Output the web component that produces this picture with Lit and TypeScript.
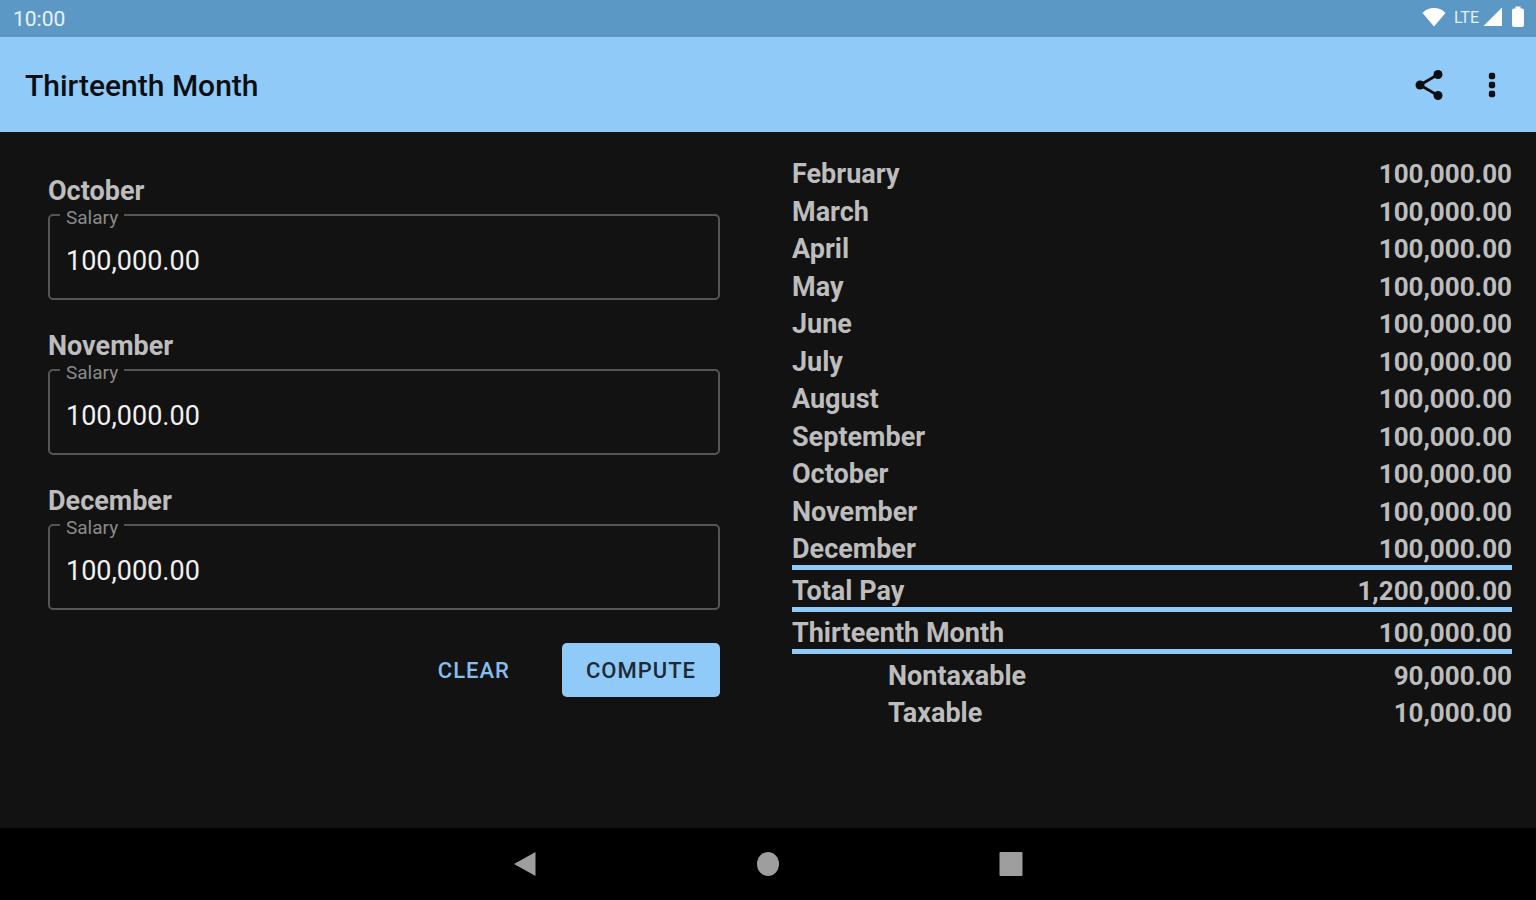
import { LitElement, html, css } from "lit";
import { customElement, state } from "lit/decorators.js";

interface ResultRow {
  name: string;
  amount: string;
  kind?: "ruled" | "indented";
}

@customElement("salary-field")
class SalaryField extends LitElement {
  static properties = {
    month: { type: String },
    value: { type: String },
  };

  declare month: string;
  declare value: string;

  static styles = css`
    :host {
      display: block;
    }
    .month {
      margin: 0 0 8px;
      font-size: 27px;
      line-height: 30px;
      font-weight: 700;
      color: #bdbdbd;
    }
    .box {
      position: relative;
    }
    .caption {
      position: absolute;
      top: -6px;
      left: 12px;
      padding: 0 6px;
      background: #121212;
      color: #8a8a8a;
      font-size: 19px;
      line-height: 20px;
    }
    .input {
      display: block;
      box-sizing: border-box;
      width: 100%;
      height: 86px;
      margin: 0;
      padding: 8px 16px 0;
      border: 2px solid #555555;
      border-radius: 5px;
      background: transparent;
      color: #f0f0f0;
      font: 400 27px Roboto, sans-serif;
      outline: none;
    }
    .input:focus-visible {
      border-color: #90caf9;
    }
  `;

  render() {
    return html`
      <h2 class="month">${this.month}</h2>
      <div class="box">
        <input class="input" id="salary" type="text" inputmode="decimal" .value=${this.value} />
        <label class="caption" for="salary">Salary</label>
      </div>
    `;
  }
}

@customElement("app-root")
class AppRoot extends LitElement {
  @state() private fields = [
    { month: "October", value: "100,000.00" },
    { month: "November", value: "100,000.00" },
    { month: "December", value: "100,000.00" },
  ];

  private rows: ResultRow[] = [
    { name: "February", amount: "100,000.00" },
    { name: "March", amount: "100,000.00" },
    { name: "April", amount: "100,000.00" },
    { name: "May", amount: "100,000.00" },
    { name: "June", amount: "100,000.00" },
    { name: "July", amount: "100,000.00" },
    { name: "August", amount: "100,000.00" },
    { name: "September", amount: "100,000.00" },
    { name: "October", amount: "100,000.00" },
    { name: "November", amount: "100,000.00" },
    { name: "December", amount: "100,000.00", kind: "ruled" },
    { name: "Total Pay", amount: "1,200,000.00", kind: "ruled" },
    { name: "Thirteenth Month", amount: "100,000.00", kind: "ruled" },
    { name: "Nontaxable", amount: "90,000.00", kind: "indented" },
    { name: "Taxable", amount: "10,000.00", kind: "indented" },
  ];

  static styles = css`
    :host {
      display: flex;
      flex-direction: column;
      min-height: 100vh;
      background: #121212;
      font-family: Roboto, sans-serif;
    }
    button {
      margin: 0;
      padding: 0;
      border: 0;
      background: none;
      color: inherit;
      font: inherit;
      cursor: pointer;
    }
    svg {
      display: block;
    }
    .status {
      display: flex;
      align-items: center;
      justify-content: space-between;
      height: 37px;
      padding: 0 11px 0 13px;
      background: #5c98c6;
      color: #eaf3fb;
      font-size: 21px;
    }
    .signals {
      display: flex;
      align-items: center;
      padding-bottom: 3px;
      color: #ffffff;
    }
    .network {
      margin: 0 4px 0 8px;
      font-size: 16px;
      color: #e3effa;
    }
    .battery {
      margin-left: 8px;
    }
    .bar {
      display: flex;
      align-items: center;
      justify-content: space-between;
      height: 95px;
      padding: 0 26px 0 25px;
      background: #90caf9;
      color: #0b0f13;
    }
    .title {
      margin: 0;
      padding-top: 2px;
      font-size: 30px;
      line-height: 40px;
      font-weight: 500;
    }
    .actions {
      display: flex;
      gap: 27px;
    }
    .content {
      flex: 1;
      display: grid;
      grid-template-columns: 1fr 1fr;
      align-items: start;
    }
    .form {
      display: flex;
      flex-direction: column;
      gap: 31px;
      padding: 44px 48px 0;
    }
    .buttons {
      display: flex;
      justify-content: flex-end;
      gap: 28px;
      padding-top: 2px;
    }
    .button {
      height: 54px;
      padding: 0 24px;
      border-radius: 5px;
      font-size: 22px;
      font-weight: 500;
      letter-spacing: 1px;
    }
    .clear {
      color: #86bdea;
    }
    .compute {
      background: #90caf9;
      color: #1d2b38;
    }
    .results {
      padding: 21px 24px 0;
    }
    .table {
      width: 100%;
      border-spacing: 0;
      color: #bdbdbd;
      line-height: 31px;
    }
    .row:nth-child(even) {
      line-height: 32px;
    }
    .row.ruled {
      line-height: 31px;
    }
    .cell {
      padding: 6px 0 0;
      font-weight: 700;
      vertical-align: top;
    }
    .name {
      text-align: left;
      font-size: 27px;
    }
    .amount {
      text-align: right;
      font-size: 26px;
    }
    .ruled .cell {
      border-bottom: 5px solid #90caf9;
    }
    .indented .name {
      padding-left: 96px;
    }
    .nav {
      display: flex;
      justify-content: center;
      height: 72px;
      background: #000000;
      color: #9e9e9e;
    }
    .key {
      display: flex;
      align-items: center;
      justify-content: center;
      width: 243px;
    }
  `;

  private clear() {
    this.fields = this.fields.map((field) => ({ ...field, value: "" }));
  }

  render() {
    return html`
      <div class="status">
        <span>10:00</span>
        <div class="signals">
          <svg width="24" height="20" viewBox="0 0 24 20" fill="currentColor" aria-hidden="true">
            <path d="M12 19.500L0.500 6Q5 1 12 1T23.500 6Z" />
          </svg>
          <span class="network">LTE</span>
          <svg width="20" height="20" viewBox="0 0 20 20" fill="currentColor" aria-hidden="true">
            <path d="M19 0.500V19H0.500Z" />
          </svg>
          <svg class="battery" width="14" height="22" viewBox="0 0 14 22" fill="currentColor" aria-hidden="true">
            <path d="M4.500 0.500H9.500V2.500H11Q13 2.500 13 4.500V19Q13 21 11 21H3Q1 21 1 19V4.500Q1 2.500 3 2.500H4.500Z" />
          </svg>
        </div>
      </div>
      <header class="bar">
        <h1 class="title">Thirteenth Month</h1>
        <div class="actions">
          <button type="button" aria-label="Share">
            <svg width="36" height="36" viewBox="0 0 24 24" fill="currentColor">
              <path d="M6 12L18 5M6 12L18 19" fill="none" stroke="currentColor" stroke-width="1.800" />
              <circle cx="6" cy="12" r="3" />
              <circle cx="18" cy="5" r="3" />
              <circle cx="18" cy="19" r="3" />
            </svg>
          </button>
          <button type="button" aria-label="More options">
            <svg width="36" height="36" viewBox="0 0 24 24" fill="currentColor">
              <rect x="9.900" y="3.900" width="4.200" height="4.200" rx="1.200" />
              <rect x="9.900" y="9.900" width="4.200" height="4.200" rx="1.200" />
              <rect x="9.900" y="15.900" width="4.200" height="4.200" rx="1.200" />
            </svg>
          </button>
        </div>
      </header>
      <main class="content">
        <form class="form" @submit=${(event: Event) => event.preventDefault()}>
          ${this.fields.map(
            (field) => html`<salary-field .month=${field.month} .value=${field.value}></salary-field>`
          )}
          <div class="buttons">
            <button class="button clear" type="button" @click=${this.clear}>CLEAR</button>
            <button class="button compute" type="submit">COMPUTE</button>
          </div>
        </form>
        <section class="results">
          <table class="table">
            <tbody>
              ${this.rows.map(
                (row) => html`
                  <tr class="row ${row.kind ?? ""}">
                    <th class="cell name" scope="row">${row.name}</th>
                    <td class="cell amount">${row.amount}</td>
                  </tr>
                `
              )}
            </tbody>
          </table>
        </section>
      </main>
      <nav class="nav">
        <button class="key" type="button" aria-label="Back">
          <svg width="24" height="26" viewBox="0 0 24 26" fill="currentColor">
            <path d="M22.500 1V25L1 13Z" />
          </svg>
        </button>
        <button class="key" type="button" aria-label="Home">
          <svg width="24" height="26" viewBox="0 0 24 26" fill="currentColor">
            <ellipse cx="12" cy="13" rx="11" ry="12" />
          </svg>
        </button>
        <button class="key" type="button" aria-label="Overview">
          <svg width="24" height="26" viewBox="0 0 24 26" fill="currentColor">
            <rect x="0.500" y="1" width="23" height="24" rx="1" />
          </svg>
        </button>
      </nav>
    `;
  }
}
